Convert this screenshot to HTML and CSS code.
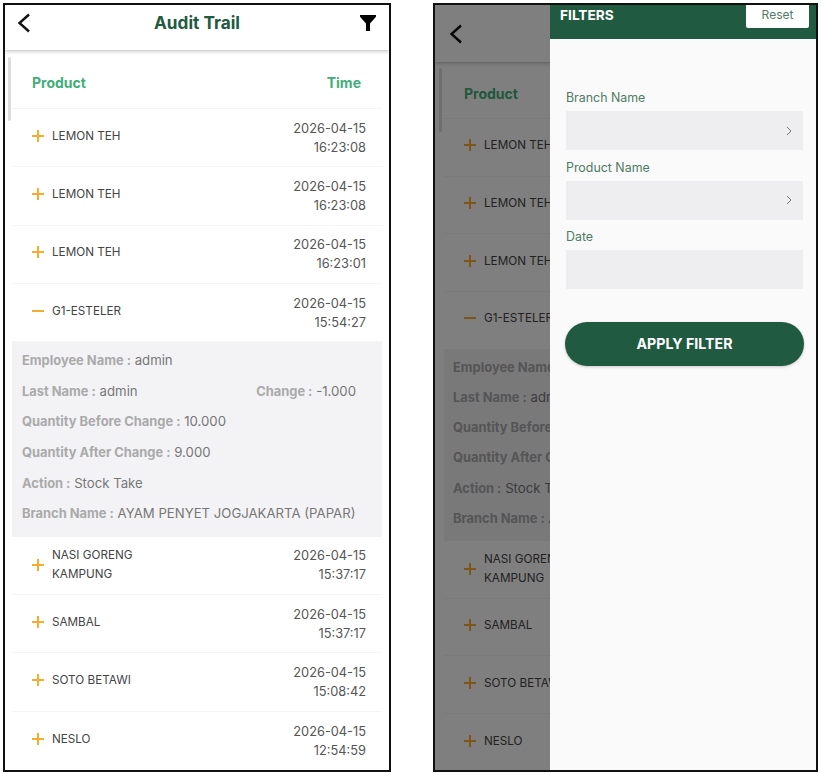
FILE: index.html
```html
<!DOCTYPE html>
<html lang="en">
<head>
<meta charset="utf-8">
<title>Audit Trail</title>
<link rel="stylesheet" href="styles.css">
</head>
<body>
<main class="board">
  <section class="phone phone-main">
    <header class="topbar">
      <svg class="icon-back" viewBox="0 0 14 20"><path d="M12 1.5 2.5 10l9.5 8.5" fill="none" stroke="#111" stroke-width="2.4"/></svg>
      <h1 class="title">Audit Trail</h1>
      <svg class="icon-filter" viewBox="0 0 16 16"><path d="M0 0h16v1.8L10 8.4V16H6V8.4L0 1.8z" fill="#000"/></svg>
    </header>
    <div class="list">
      <span class="scrollbar"></span>
      <div class="list-head"><span>Product</span><span>Time</span></div>
      <div class="row"><i class="plus"></i><span class="name">LEMON TEH</span><span class="time">2026-04-15<br>16:23:08</span></div>
      <div class="row"><i class="plus"></i><span class="name">LEMON TEH</span><span class="time">2026-04-15<br>16:23:08</span></div>
      <div class="row"><i class="plus"></i><span class="name">LEMON TEH</span><span class="time">2026-04-15<br>16:23:01</span></div>
      <div class="row"><i class="minus"></i><span class="name">G1-ESTELER</span><span class="time">2026-04-15<br>15:54:27</span></div>
      <div class="detail">
        <p><b>Employee Name :</b> admin</p>
        <p class="split"><span><b>Last Name :</b> admin</span><span><b>Change :</b> -1.000</span></p>
        <p><b>Quantity Before Change :</b> 10.000</p>
        <p><b>Quantity After Change :</b> 9.000</p>
        <p><b>Action :</b> Stock Take</p>
        <p><b>Branch Name :</b> AYAM PENYET JOGJAKARTA (PAPAR)</p>
      </div>
      <div class="row row-two"><i class="plus"></i><span class="name">NASI GORENG<br>KAMPUNG</span><span class="time">2026-04-15<br>15:37:17</span></div>
      <div class="row"><i class="plus"></i><span class="name">SAMBAL</span><span class="time">2026-04-15<br>15:37:17</span></div>
      <div class="row"><i class="plus"></i><span class="name">SOTO BETAWI</span><span class="time">2026-04-15<br>15:08:42</span></div>
      <div class="row"><i class="plus"></i><span class="name">NESLO</span><span class="time">2026-04-15<br>12:54:59</span></div>
    </div>
  </section>

  <section class="phone phone-filter">
    <header class="topbar">
      <svg class="icon-back" viewBox="0 0 14 20"><path d="M12 1.5 2.5 10l9.5 8.5" fill="none" stroke="#111" stroke-width="2.4"/></svg>
    </header>
    <div class="list">
      <span class="scrollbar"></span>
      <div class="list-head"><span>Product</span></div>
      <div class="row"><i class="plus"></i><span class="name">LEMON TEH</span></div>
      <div class="row"><i class="plus"></i><span class="name">LEMON TEH</span></div>
      <div class="row"><i class="plus"></i><span class="name">LEMON TEH</span></div>
      <div class="row"><i class="minus"></i><span class="name">G1-ESTELER</span></div>
      <div class="detail">
        <p><b>Employee Name :</b> admin</p>
        <p><b>Last Name :</b> admin</p>
        <p><b>Quantity Before Change :</b> 10.000</p>
        <p><b>Quantity After Change :</b> 9.000</p>
        <p><b>Action :</b> Stock Take</p>
        <p><b>Branch Name :</b> AYAM PENYET</p>
      </div>
      <div class="row row-two"><i class="plus"></i><span class="name">NASI GORENG<br>KAMPUNG</span></div>
      <div class="row"><i class="plus"></i><span class="name">SAMBAL</span></div>
      <div class="row"><i class="plus"></i><span class="name">SOTO BETAWI</span></div>
      <div class="row"><i class="plus"></i><span class="name">NESLO</span></div>
    </div>
    <div class="scrim"></div>
    <aside class="drawer">
      <div class="drawer-head">
        <span class="drawer-title">FILTERS</span>
        <button class="reset">Reset</button>
      </div>
      <div class="drawer-body">
        <label class="field-label">Branch Name</label>
        <div class="field"><svg class="chev" viewBox="0 0 6 10"><path d="M1 1l4 4-4 4" fill="none" stroke="#777" stroke-width="1"/></svg></div>
        <label class="field-label">Product Name</label>
        <div class="field"><svg class="chev" viewBox="0 0 6 10"><path d="M1 1l4 4-4 4" fill="none" stroke="#777" stroke-width="1"/></svg></div>
        <label class="field-label">Date</label>
        <div class="field"></div>
        <button class="apply">APPLY FILTER</button>
      </div>
    </aside>
  </section>
</main>
</body>
</html>
```
FILE: styles.css
```css
* { box-sizing: border-box; }
html, body { margin: 0; padding: 0; background: #fff; }
body { font-family: Inter, "Open Sans", sans-serif; color: #444; width: 822px; height: 773px; overflow: hidden; }

.board { display: flex; padding: 3px 0 0 3px; gap: 42px; }

.phone {
  position: relative;
  height: 769px;
  border: 2px solid #111;
  background: #fff;
  overflow: hidden;
  flex: none;
}
.phone-main { width: 388px; --bar: 45px; --row: 58.3px; --line: 30.6px; --head: 59px; --gutter: 20px; --side: 7px; --detail-top: 3px; --detail-pad: 10px; }
.phone-filter { width: 385px; --bar: 57px; --row: 57.7px; --line: 30.2px; --head: 57px; --gutter: 20px; --side: 9px; --detail-top: 2px; --detail-pad: 9px; }

.topbar {
  position: relative;
  height: var(--bar);
  display: flex;
  align-items: center;
  justify-content: center;
  background: #fff;
  box-shadow: 0 1px 4px rgba(0,0,0,.28);
  z-index: 1;
}
.title { margin: 0 0 10px; font-size: 17.2px; line-height: 24px; font-weight: 700; color: #205a40; }
.icon-back { position: absolute; left: 12px; top: 8px; width: 14px; height: 20px; }
.phone-filter .icon-back { left: 14px; top: 19px; width: 14px; height: 20px; }
.icon-filter { position: absolute; right: 13px; top: 10px; width: 16px; height: 16px; }

.list { position: relative; padding: 0 var(--side); }
.scrollbar { position: absolute; left: 3px; top: 7px; width: 3px; height: 64px; background: #ddd; border-radius: 2px; }
.phone-filter .scrollbar { left: 4px; top: 6px; }

.list-head {
  height: var(--head);
  padding: 7px 21px 0 var(--gutter);
  display: flex;
  justify-content: space-between;
  align-items: center;
  font-size: 14px;
  font-weight: 700;
  color: #41ae7a;
  border-bottom: 1px solid #f4f4f4;
}

.row {
  height: var(--row);
  padding: 0 16px 0 var(--gutter);
  display: flex;
  align-items: center;
  border-bottom: 1px solid #f5f5f5;
  font-size: 11.7px;
}
.row:nth-last-child(1) { border-bottom: 0; }
.name { flex: 1; padding-bottom: 3px; line-height: 19px; color: #444; }
.row-two .name { padding-bottom: 0; }
.row-two .plus { margin-bottom: 0; }
.time { text-align: right; font-size: 12.8px; line-height: 19px; color: #555; }

.plus, .minus { position: relative; flex: none; width: 12px; height: 12px; margin: 0 8px 4px 0; }
.plus::before, .minus::before { content: ""; position: absolute; left: 0; right: 0; top: 5px; height: 2px; background: #f9ab2e; }
.plus::after { content: ""; position: absolute; top: 0; bottom: 0; left: 5px; width: 2px; background: #f9ab2e; }

.detail { background: #f3f3f5; padding: var(--detail-top) var(--detail-pad) 8px; font-size: 13.2px; color: #777; }
.detail p { margin: 0; height: var(--line); line-height: var(--line); white-space: nowrap; }
.detail b { font-size: 12.9px; font-weight: 700; color: #aaa; }
.split { display: flex; justify-content: space-between; padding-right: 16px; }

.scrim { position: absolute; inset: 0; background: rgba(0,0,0,.5); z-index: 2; }

.drawer {
  position: absolute;
  top: 0;
  bottom: 0;
  right: 0;
  width: 266px;
  background: #fafafa;
  z-index: 3;
  display: flex;
  flex-direction: column;
}
.drawer-head {
  height: 34px;
  flex: none;
  background: #205a40;
  display: flex;
  justify-content: space-between;
  padding: 0 7px 0 10px;
}
.drawer-title { font-size: 13.7px; line-height: 20px; font-weight: 700; color: #fff; }
.reset {
  width: 63px;
  height: 23px;
  border: 0;
  padding: 0 0 4px;
  background: #fff;
  border-radius: 0 0 2px 2px;
  font: 12px Inter, sans-serif;
  color: #4f7a66;
}
.drawer-body { padding: 48px 13px 0 16px; display: flex; flex-direction: column; }
.field-label { font-size: 12.4px; line-height: 18px; color: #4f7a66; height: 24px; padding-top: 2px; }
.field {
  height: 39px;
  margin-bottom: 6.5px;
  padding-right: 11px;
  background: #eeeef0;
  display: flex;
  align-items: center;
  justify-content: flex-end;
}
.chev { width: 6px; height: 10px; }
.apply {
  margin: 26.5px -1px 0 -1px;
  height: 44px;
  border: 0;
  padding: 0 0 2px;
  border-radius: 22px;
  background: #205a40;
  color: #fff;
  font: 700 14.2px Inter, sans-serif;
  box-shadow: 0 1px 3px rgba(0,0,0,.2);
}
```
